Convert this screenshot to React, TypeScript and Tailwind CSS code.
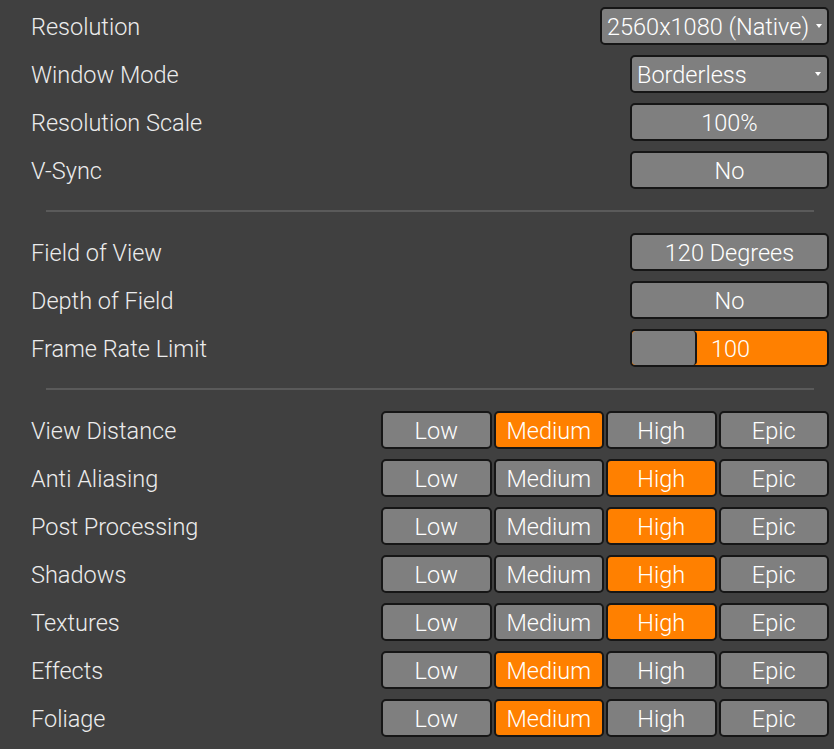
const levels = ['Low', 'Medium', 'High', 'Epic'];

const quality: [string, number][] = [
  ['View Distance', 1],
  ['Anti Aliasing', 2],
  ['Post Processing', 2],
  ['Shadows', 2],
  ['Textures', 2],
  ['Effects', 1],
  ['Foliage', 1],
];

const box = 'h-[38px] rounded-[5px] border-2 border-[#161616] bg-[#7f7f7f] text-white';

function Arrow() {
  return (
    <svg width="6" height="4" viewBox="0 0 6 4" className="shrink-0">
      <path d="M0 0h6L3 4z" fill="#fff" />
    </svg>
  );
}

function Row({ label, children }: { label: string; children: React.ReactNode }) {
  return (
    <div className="flex h-[38px] items-center justify-between">
      <span className="pt-[3px] text-[#ececec]">{label}</span>
      {children}
    </div>
  );
}

function Plain({ value }: { value: string }) {
  return (
    <div className={`${box} flex w-[199px] items-center justify-center pt-[3px]`}>{value}</div>
  );
}

function Divider() {
  return <div className="mx-[15px] my-[11px] h-[2px] bg-[#5a5a5a]" />;
}

export default function App() {
  return (
    <div
      className="flex h-[749px] w-[834px] flex-col gap-[10px] bg-[#404040] pl-[31px] pr-[5px] pt-[7px] text-[23.5px] font-light leading-none"
      style={{ fontFamily: '"Roboto Light", Roboto, "Liberation Sans", sans-serif' }}
    >
      <Row label="Resolution">
        <div className={`${box} flex w-[229px] items-center justify-between pl-[5px] pr-[5px]`}>
          <span className="pt-[3px]">2560x1080 (Native)</span>
          <Arrow />
        </div>
      </Row>
      <Row label="Window Mode">
        <div className={`${box} flex w-[199px] items-center justify-between pl-[5px] pr-[6px]`}>
          <span className="pt-[3px]">Borderless</span>
          <Arrow />
        </div>
      </Row>
      <Row label="Resolution Scale">
        <Plain value="100%" />
      </Row>
      <Row label="V-Sync">
        <Plain value="No" />
      </Row>

      <Divider />

      <Row label="Field of View">
        <Plain value="120 Degrees" />
      </Row>
      <Row label="Depth of Field">
        <Plain value="No" />
      </Row>
      <Row label="Frame Rate Limit">
        <div className="flex h-[38px] w-[199px] overflow-hidden rounded-[5px] border-2 border-[#161616] bg-[#ff8000] text-white">
          <div className="w-[65px] rounded-[4px] border-r-2 border-[#161616] bg-[#7f7f7f]" />
          <span className="flex items-center pl-[14px] pt-[3px]">100</span>
        </div>
      </Row>

      <Divider />

      {quality.map(([label, sel]) => (
        <Row key={label} label={label}>
          <div className="flex gap-[2px]">
            {levels.map((lv, i) => (
              <div
                key={lv}
                className={`flex h-[38px] w-[110.5px] items-center justify-center rounded-[5px] border-2 border-[#161616] pt-[3px] text-white ${
                  i === sel ? 'bg-[#ff8000]' : 'bg-[#7f7f7f]'
                }`}
              >
                {lv}
              </div>
            ))}
          </div>
        </Row>
      ))}
    </div>
  );
}
